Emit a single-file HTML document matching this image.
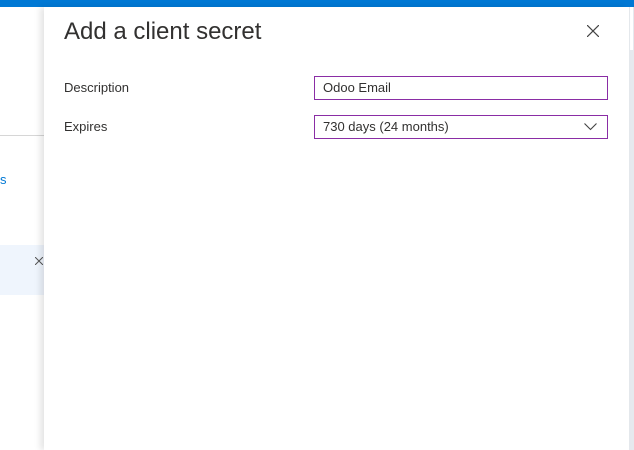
<!DOCTYPE html>
<html><head><style>
body{margin:0;width:634px;height:450px;overflow:hidden;position:relative;background:#fff;font-family:"Segoe UI","Liberation Sans",sans-serif;}
.top{position:absolute;left:0;top:0;width:634px;height:7px;background:#0078d4;}
.strip{position:absolute;left:629px;top:7px;width:5px;height:443px;background:#e6e9ee;}
.hl{position:absolute;left:0;top:245px;width:44px;height:50px;background:#eff5fd;}
.line{position:absolute;left:0;top:135px;width:44px;height:1px;background:#d6d6d6;}
.panel{position:absolute;left:44px;top:7px;width:585px;height:443px;background:#fff;box-shadow:-4px 0 6px rgba(0,0,0,0.10);}
h1{position:absolute;left:20px;top:11px;margin:0;font-weight:400;font-size:24px;color:#323130;}
.lbl{position:absolute;left:20px;font-size:13px;color:#323130;}
.box{position:absolute;left:270px;height:22px;border:1px solid #8a2da5;font-size:13px;color:#323130;line-height:22px;padding-left:8px;width:284px;}
</style></head><body>
<div class="top"></div>
<div class="line"></div>
<div style="position:absolute;left:0;top:172px;font-size:13px;color:#0078d4">s</div>
<div class="hl"></div>
<svg style="position:absolute;left:35px;top:257px" width="8" height="8"><path d="M0 0L8 8M8 0L0 8" stroke="#555" stroke-width="1"/></svg>
<div class="strip"></div>
<div style="position:absolute;left:630px;top:7px;width:3px;height:43px;background:#fff"></div>
<div class="panel">
<h1>Add a client secret</h1>
<svg style="position:absolute;left:543px;top:18px" width="12" height="12"><path d="M0 0L12 12M12 0L0 12" stroke="#444" stroke-width="1.2"/></svg>
<div class="lbl" style="top:73px">Description</div>
<div class="box" style="top:69px">Odoo Email</div>
<div class="lbl" style="top:112px">Expires</div>
<div class="box" style="top:108px">730 days (24 months)
<svg style="position:absolute;right:10px;top:7px" width="13" height="8"><path d="M0.5 0.5L6.5 6.5L12.5 0.5" fill="none" stroke="#444" stroke-width="1.1"/></svg></div>
</div>
</body></html>
